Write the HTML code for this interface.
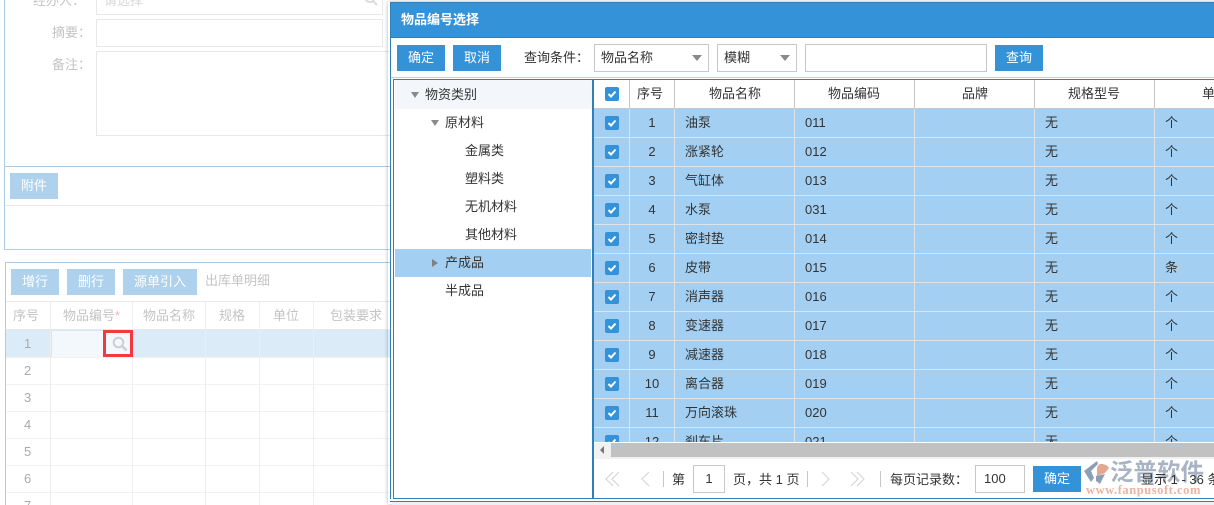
<!DOCTYPE html>
<html><head><meta charset="utf-8"><style>
html,body{margin:0;padding:0;background:#fff}
#r{position:relative;width:1214px;height:505px;overflow:hidden;background:#fff;font:13px "Liberation Sans","Noto Sans CJK SC",sans-serif;color:#333}
#r div,#r span.a{position:absolute;box-sizing:border-box;white-space:nowrap}
.t{line-height:18px}
.l{color:#b5b5b5}
.fb{border:1px solid #e8e8e8;background:#fff}
.lb{background:#aed2ee;color:#fff;text-align:center;height:26px;line-height:25px}
.b{background:#3492d9;color:#fff;text-align:center;height:26px;line-height:25px;width:48px}
.v{width:1px}
.g{color:#333}
.sel{border:1px solid #c8c8c8;height:28px;background:#fff;line-height:26px;padding-left:6px}
.ar{width:0;height:0;border-left:5px solid transparent;border-right:5px solid transparent;border-top:6px solid #8a8a8a}
</style></head><body><div id="r">

<!-- background panel 1 -->
<div style="left:4px;top:-2px;width:1px;height:252px;background:#a9cde6"></div>
<div style="left:4px;top:166px;width:390px;height:1px;background:#a9cde6"></div>
<div style="left:4px;top:249px;width:390px;height:1px;background:#b4cfe0"></div>
<div class="t l" style="left:33px;top:-8px;color:#c4c4c4">经办人：</div>
<div class="fb" style="left:96px;top:-10px;width:287px;height:25px"></div>
<div class="t" style="left:104px;top:-8px;color:#d8d8d8">请选择</div>
<svg style="position:absolute;left:362px;top:-6px" width="18" height="16"><circle cx="8" cy="3" r="5" fill="none" stroke="#dcdcdc" stroke-width="2"/><path d="M11 7l4 4" stroke="#dcdcdc" stroke-width="2"/></svg>
<div class="t l" style="left:52px;top:24px;color:#c4c4c4">摘要：</div>
<div class="fb" style="left:96px;top:19px;width:287px;height:28px"></div>
<div class="t l" style="left:52px;top:56px;color:#c4c4c4">备注：</div>
<div class="fb" style="left:96px;top:51px;width:300px;height:85px"></div>
<div class="lb" style="left:10px;top:173px;width:48px">附件</div>
<div style="left:5px;top:205px;width:390px;height:1px;background:#e8e8e8"></div>

<!-- background panel 2 -->
<div style="left:5px;top:262px;width:390px;height:1px;background:#a9cde6"></div>
<div style="left:5px;top:262px;width:1px;height:243px;background:#a9cde6"></div>
<div class="lb" style="left:11px;top:269px;width:48px">增行</div>
<div class="lb" style="left:67px;top:269px;width:48px">删行</div>
<div class="lb" style="left:123px;top:269px;width:74px">源单引入</div>
<div class="t" style="left:205px;top:272px;color:#c4c4c4">出库单明细</div>
<div style="left:6px;top:301px;width:385px;height:1px;background:#e8e8e8"></div>
<div style="left:6px;top:329px;width:385px;height:1px;background:#e8e8e8"></div>
<div style="left:6px;top:330px;width:385px;height:27px;background:#dbecf8"></div>
<div style="left:51px;top:330px;width:54px;height:28px;background:#f3f8fd;border:1px solid #d5e7f6;border-right:0"></div>
<div style="left:6px;top:384px;width:385px;height:1px;background:#f2f2f2"></div>
<div style="left:6px;top:357px;width:385px;height:1px;background:#f2f2f2"></div>
<div style="left:6px;top:411px;width:385px;height:1px;background:#f2f2f2"></div>
<div style="left:6px;top:438px;width:385px;height:1px;background:#f2f2f2"></div>
<div style="left:6px;top:465px;width:385px;height:1px;background:#f2f2f2"></div>
<div style="left:6px;top:492px;width:385px;height:1px;background:#f2f2f2"></div>
<div class="v" style="left:50px;top:302px;height:203px;background:#eee"></div>
<div class="v" style="left:132px;top:302px;height:203px;background:#eee"></div>
<div class="v" style="left:205px;top:302px;height:203px;background:#eee"></div>
<div class="v" style="left:259px;top:302px;height:203px;background:#eee"></div>
<div class="v" style="left:313px;top:302px;height:203px;background:#eee"></div>
<div class="t" style="left:13px;top:307px;color:#c4c4c4">序号</div>
<div class="t" style="left:63px;top:307px;color:#c4c4c4">物品编号<span style="color:#f3b5b5">*</span></div>
<div class="t" style="left:143px;top:307px;color:#c4c4c4">物品名称</div>
<div class="t" style="left:219px;top:307px;color:#c4c4c4">规格</div>
<div class="t" style="left:273px;top:307px;color:#c4c4c4">单位</div>
<div class="t" style="left:330px;top:307px;color:#c4c4c4">包装要求</div>
<div class="t" style="left:24px;top:335px;color:#aaa">1</div>
<div class="t" style="left:24px;top:362px;color:#aaa">2</div>
<div class="t" style="left:24px;top:389px;color:#aaa">3</div>
<div class="t" style="left:24px;top:416px;color:#aaa">4</div>
<div class="t" style="left:24px;top:443px;color:#aaa">5</div>
<div class="t" style="left:24px;top:470px;color:#aaa">6</div>
<div class="t" style="left:24px;top:497px;color:#aaa">7</div>
<div style="left:103px;top:330px;width:30px;height:27px;border:3px solid #f23a3a;background:#f3f8fd"></div>
<svg style="position:absolute;left:112px;top:336px" width="16" height="16"><circle cx="6.500" cy="6.500" r="4.800" fill="none" stroke="#cfcfcf" stroke-width="2"/><path d="M10 10l4.500 4.500" stroke="#cfcfcf" stroke-width="2.400"/></svg>

<!-- dialog -->
<div style="left:388px;top:2px;width:830px;height:502px;box-shadow:0 0 4px rgba(0,0,0,.3)"></div>
<div style="left:390px;top:2px;width:830px;height:500px;background:#fff;border:1px solid #2f7fb8"></div>
<div style="left:391px;top:3px;width:823px;height:35px;background:#3492d9;border-bottom:1px solid #2f7fb8"></div>
<div class="t" style="left:401px;top:11px;color:#fff;font-weight:bold;font-size:13px">物品编号选择</div>

<div class="b" style="left:397px;top:45px">确定</div>
<div class="b" style="left:453px;top:45px">取消</div>
<div class="t" style="left:524px;top:49px">查询条件：</div>
<div class="sel" style="left:594px;top:44px;width:115px">物品名称<div class="ar" style="left:97px;top:10px"></div></div>
<div class="sel" style="left:717px;top:44px;width:80px">模糊<div class="ar" style="left:62px;top:10px"></div></div>
<div class="sel" style="left:805px;top:44px;width:182px"></div>
<div class="b" style="left:995px;top:45px">查询</div>
<div style="left:391px;top:77px;width:823px;height:1px;background:#ccc"></div>

<!-- frame -->
<div style="left:393px;top:79px;width:821px;height:421px;border:1px solid #2f7fb8;border-right:0;background:#fff"></div>
<div style="left:592px;top:79px;width:2px;height:420px;background:#2f7fb8"></div>

<!-- tree -->
<div style="left:395px;top:80px;width:197px;height:29px;background:#f3f7fc"></div>
<div style="left:395px;top:249px;width:196px;height:28px;background:#a3d0f2"></div>
<div class="ar" style="left:411px;top:92px;border-left-width:4px;border-right-width:4px;border-top-width:6px"></div>
<div class="ar" style="left:431px;top:120px;border-left-width:4px;border-right-width:4px;border-top-width:6px"></div>
<div style="left:432px;top:259px;width:0;height:0;border-top:4px solid transparent;border-bottom:4px solid transparent;border-left:6px solid #808080"></div>
<div class="t" style="left:425px;top:86px">物资类别</div>
<div class="t" style="left:445px;top:114px">原材料</div>
<div class="t" style="left:465px;top:142px">金属类</div>
<div class="t" style="left:465px;top:170px">塑料类</div>
<div class="t" style="left:465px;top:198px">无机材料</div>
<div class="t" style="left:465px;top:226px">其他材料</div>
<div class="t" style="left:445px;top:254px">产成品</div>
<div class="t" style="left:445px;top:282px">半成品</div>

<!-- grid -->
<div style="left:594px;top:108px;width:620px;height:1px;background:#c8c8c8"></div>
<div style="left:594px;top:109px;width:620px;height:334px;background:#a3d0f2"></div>
<div class="v" style="left:629px;top:80px;height:29px;background:#c8c8c8"></div>
<div class="v" style="left:674px;top:80px;height:29px;background:#c8c8c8"></div>
<div class="v" style="left:794px;top:80px;height:29px;background:#c8c8c8"></div>
<div class="v" style="left:914px;top:80px;height:29px;background:#c8c8c8"></div>
<div class="v" style="left:1034px;top:80px;height:29px;background:#c8c8c8"></div>
<div class="v" style="left:1154px;top:80px;height:29px;background:#c8c8c8"></div>
<div class="v" style="left:629px;top:109px;height:334px;background:#dde3e7"></div>
<div class="v" style="left:674px;top:109px;height:334px;background:#dde3e7"></div>
<div class="v" style="left:794px;top:109px;height:334px;background:#dde3e7"></div>
<div class="v" style="left:914px;top:109px;height:334px;background:#dde3e7"></div>
<div class="v" style="left:1034px;top:109px;height:334px;background:#dde3e7"></div>
<div class="v" style="left:1154px;top:109px;height:334px;background:#dde3e7"></div>

<div class="t" style="left:637px;top:85px">序号</div>
<div class="t" style="left:709px;top:85px">物品名称</div>
<div class="t" style="left:828px;top:85px">物品编码</div>
<div class="t" style="left:962px;top:85px">品牌</div>
<div class="t" style="left:1068px;top:85px">规格型号</div>
<div class="t" style="left:1202px;top:85px">单</div>

<svg style="position:absolute;left:0;top:0;pointer-events:none" width="1214" height="505">
<g fill="#dde3e7"><rect x="594" y="137" width="620" height="1"/><rect x="594" y="166" width="620" height="1"/><rect x="594" y="195" width="620" height="1"/><rect x="594" y="224" width="620" height="1"/><rect x="594" y="253" width="620" height="1"/><rect x="594" y="282" width="620" height="1"/><rect x="594" y="311" width="620" height="1"/><rect x="594" y="340" width="620" height="1"/><rect x="594" y="369" width="620" height="1"/><rect x="594" y="398" width="620" height="1"/><rect x="594" y="427" width="620" height="1"/></g>
<g fill="#3492d9"><rect x="605" y="87" width="14" height="14" rx="2"/><rect x="605" y="116" width="14" height="14" rx="2"/><rect x="605" y="145" width="14" height="14" rx="2"/><rect x="605" y="174" width="14" height="14" rx="2"/><rect x="605" y="203" width="14" height="14" rx="2"/><rect x="605" y="232" width="14" height="14" rx="2"/><rect x="605" y="261" width="14" height="14" rx="2"/><rect x="605" y="290" width="14" height="14" rx="2"/><rect x="605" y="319" width="14" height="14" rx="2"/><rect x="605" y="348" width="14" height="14" rx="2"/><rect x="605" y="377" width="14" height="14" rx="2"/><rect x="605" y="406" width="14" height="14" rx="2"/><rect x="605" y="435" width="14" height="14" rx="2"/></g>
<g fill="none" stroke="#fff" stroke-width="2"><path d="M608.500 94l2.500 2.500 4.500-5"/><path d="M608.500 123l2.500 2.500 4.500-5"/><path d="M608.500 152l2.500 2.500 4.500-5"/><path d="M608.500 181l2.500 2.500 4.500-5"/><path d="M608.500 210l2.500 2.500 4.500-5"/><path d="M608.500 239l2.500 2.500 4.500-5"/><path d="M608.500 268l2.500 2.500 4.500-5"/><path d="M608.500 297l2.500 2.500 4.500-5"/><path d="M608.500 326l2.500 2.500 4.500-5"/><path d="M608.500 355l2.500 2.500 4.500-5"/><path d="M608.500 384l2.500 2.500 4.500-5"/><path d="M608.500 413l2.500 2.500 4.500-5"/><path d="M608.500 442l2.500 2.500 4.500-5"/></g>
</svg>

<div class="t g" style="left:630px;width:44px;text-align:center;top:114px">1</div><div class="t g" style="left:685px;top:114px">油泵</div><div class="t g" style="left:805px;top:114px">011</div><div class="t g" style="left:1045px;top:114px">无</div><div class="t g" style="left:1165px;top:114px">个</div>
<div class="t g" style="left:630px;width:44px;text-align:center;top:143px">2</div><div class="t g" style="left:685px;top:143px">涨紧轮</div><div class="t g" style="left:805px;top:143px">012</div><div class="t g" style="left:1045px;top:143px">无</div><div class="t g" style="left:1165px;top:143px">个</div>
<div class="t g" style="left:630px;width:44px;text-align:center;top:172px">3</div><div class="t g" style="left:685px;top:172px">气缸体</div><div class="t g" style="left:805px;top:172px">013</div><div class="t g" style="left:1045px;top:172px">无</div><div class="t g" style="left:1165px;top:172px">个</div>
<div class="t g" style="left:630px;width:44px;text-align:center;top:201px">4</div><div class="t g" style="left:685px;top:201px">水泵</div><div class="t g" style="left:805px;top:201px">031</div><div class="t g" style="left:1045px;top:201px">无</div><div class="t g" style="left:1165px;top:201px">个</div>
<div class="t g" style="left:630px;width:44px;text-align:center;top:230px">5</div><div class="t g" style="left:685px;top:230px">密封垫</div><div class="t g" style="left:805px;top:230px">014</div><div class="t g" style="left:1045px;top:230px">无</div><div class="t g" style="left:1165px;top:230px">个</div>
<div class="t g" style="left:630px;width:44px;text-align:center;top:259px">6</div><div class="t g" style="left:685px;top:259px">皮带</div><div class="t g" style="left:805px;top:259px">015</div><div class="t g" style="left:1045px;top:259px">无</div><div class="t g" style="left:1165px;top:259px">条</div>
<div class="t g" style="left:630px;width:44px;text-align:center;top:288px">7</div><div class="t g" style="left:685px;top:288px">消声器</div><div class="t g" style="left:805px;top:288px">016</div><div class="t g" style="left:1045px;top:288px">无</div><div class="t g" style="left:1165px;top:288px">个</div>
<div class="t g" style="left:630px;width:44px;text-align:center;top:317px">8</div><div class="t g" style="left:685px;top:317px">变速器</div><div class="t g" style="left:805px;top:317px">017</div><div class="t g" style="left:1045px;top:317px">无</div><div class="t g" style="left:1165px;top:317px">个</div>
<div class="t g" style="left:630px;width:44px;text-align:center;top:346px">9</div><div class="t g" style="left:685px;top:346px">减速器</div><div class="t g" style="left:805px;top:346px">018</div><div class="t g" style="left:1045px;top:346px">无</div><div class="t g" style="left:1165px;top:346px">个</div>
<div class="t g" style="left:630px;width:44px;text-align:center;top:375px">10</div><div class="t g" style="left:685px;top:375px">离合器</div><div class="t g" style="left:805px;top:375px">019</div><div class="t g" style="left:1045px;top:375px">无</div><div class="t g" style="left:1165px;top:375px">个</div>
<div class="t g" style="left:630px;width:44px;text-align:center;top:404px">11</div><div class="t g" style="left:685px;top:404px">万向滚珠</div><div class="t g" style="left:805px;top:404px">020</div><div class="t g" style="left:1045px;top:404px">无</div><div class="t g" style="left:1165px;top:404px">个</div>
<div class="t g" style="left:630px;width:44px;text-align:center;top:433px">12</div><div class="t g" style="left:685px;top:433px">刹车片</div><div class="t g" style="left:805px;top:433px">021</div><div class="t g" style="left:1045px;top:433px">无</div><div class="t g" style="left:1165px;top:433px">个</div>

<!-- scrollbar -->
<div style="left:594px;top:442px;width:620px;height:18px;background:#f1f1f1;border-top:1px solid #fff"></div>
<div style="left:611px;top:443px;width:603px;height:14px;background:#c1c1c1"></div>
<div style="left:600px;top:446px;width:0;height:0;border-top:4px solid transparent;border-bottom:4px solid transparent;border-right:4px solid #777"></div>
<div style="left:594px;top:459px;width:620px;height:39px;background:#fff"></div>

<!-- pager -->
<svg style="position:absolute;left:600px;top:468px" width="270" height="22" fill="none" stroke="#d6d6d6" stroke-width="1.200">
<path d="M13 4l-7 7 7 7M19 4l-7 7 7 7"/><path d="M49 4l-7 7 7 7"/><path d="M222 4l7 7-7 7"/><path d="M258 4l7 7-7 7M252 4l7 7-7 7" transform="translate(-1 0)"/>
</svg>
<div class="v" style="left:663px;top:471px;height:16px;background:#c8c8c8"></div>
<div class="v" style="left:807px;top:471px;height:16px;background:#c8c8c8"></div>
<div class="v" style="left:880px;top:471px;height:16px;background:#c8c8c8"></div>
<div class="t" style="left:672px;top:471px">第</div>
<div class="sel" style="left:693px;top:465px;width:32px;text-align:center;padding:0;line-height:25px">1</div>
<div class="t" style="left:733px;top:471px">页，共 1 页</div>
<div class="t" style="left:890px;top:471px">每页记录数：</div>
<div class="sel" style="left:975px;top:465px;width:50px;line-height:25px;padding-left:8px">100</div>
<div class="b" style="left:1033px;top:466px">确定</div>

<!-- watermark -->
<svg style="position:absolute;left:1082px;top:458px" width="32" height="32">
<path d="M15 3L2 13l7 11 3-4-3-7 7-7z" fill="#8d9fb8"/>
<path d="M15 10c1-3 3-5 5-4 3 0 6 2 7 4l-4 5-8 3z" fill="#e4a892"/>
<path d="M14 18l9-2-5 10-4-3z" fill="#8d9fb8"/>
</svg>
<div class="t" style="left:1110px;top:456px;font-size:23.500px;line-height:32px;color:#93a1b5;font-weight:bold;opacity:.8">泛普软件</div>
<div class="t" style="left:1141px;top:471px;color:#333">显示 1 - 36 条</div>
<div class="t" style="left:1086px;top:482px;font:bold 12.500px 'Liberation Serif',serif;line-height:16px;color:#ebb3a0;letter-spacing:.55px">www.fanpusoft.com</div>

<!-- bottom lines -->
<div style="left:594px;top:498px;width:620px;height:1px;background:#2f7fb8"></div>
<div style="left:390px;top:499px;width:824px;height:2px;background:#fff"></div>
<div style="left:390px;top:501px;width:824px;height:1px;background:#2f7fb8"></div>
<div style="left:393px;top:498px;width:200px;height:1px;background:#2f7fb8"></div>
<div style="left:392px;top:502px;width:822px;height:3px;background:#efefef"></div>
</div></body></html>
